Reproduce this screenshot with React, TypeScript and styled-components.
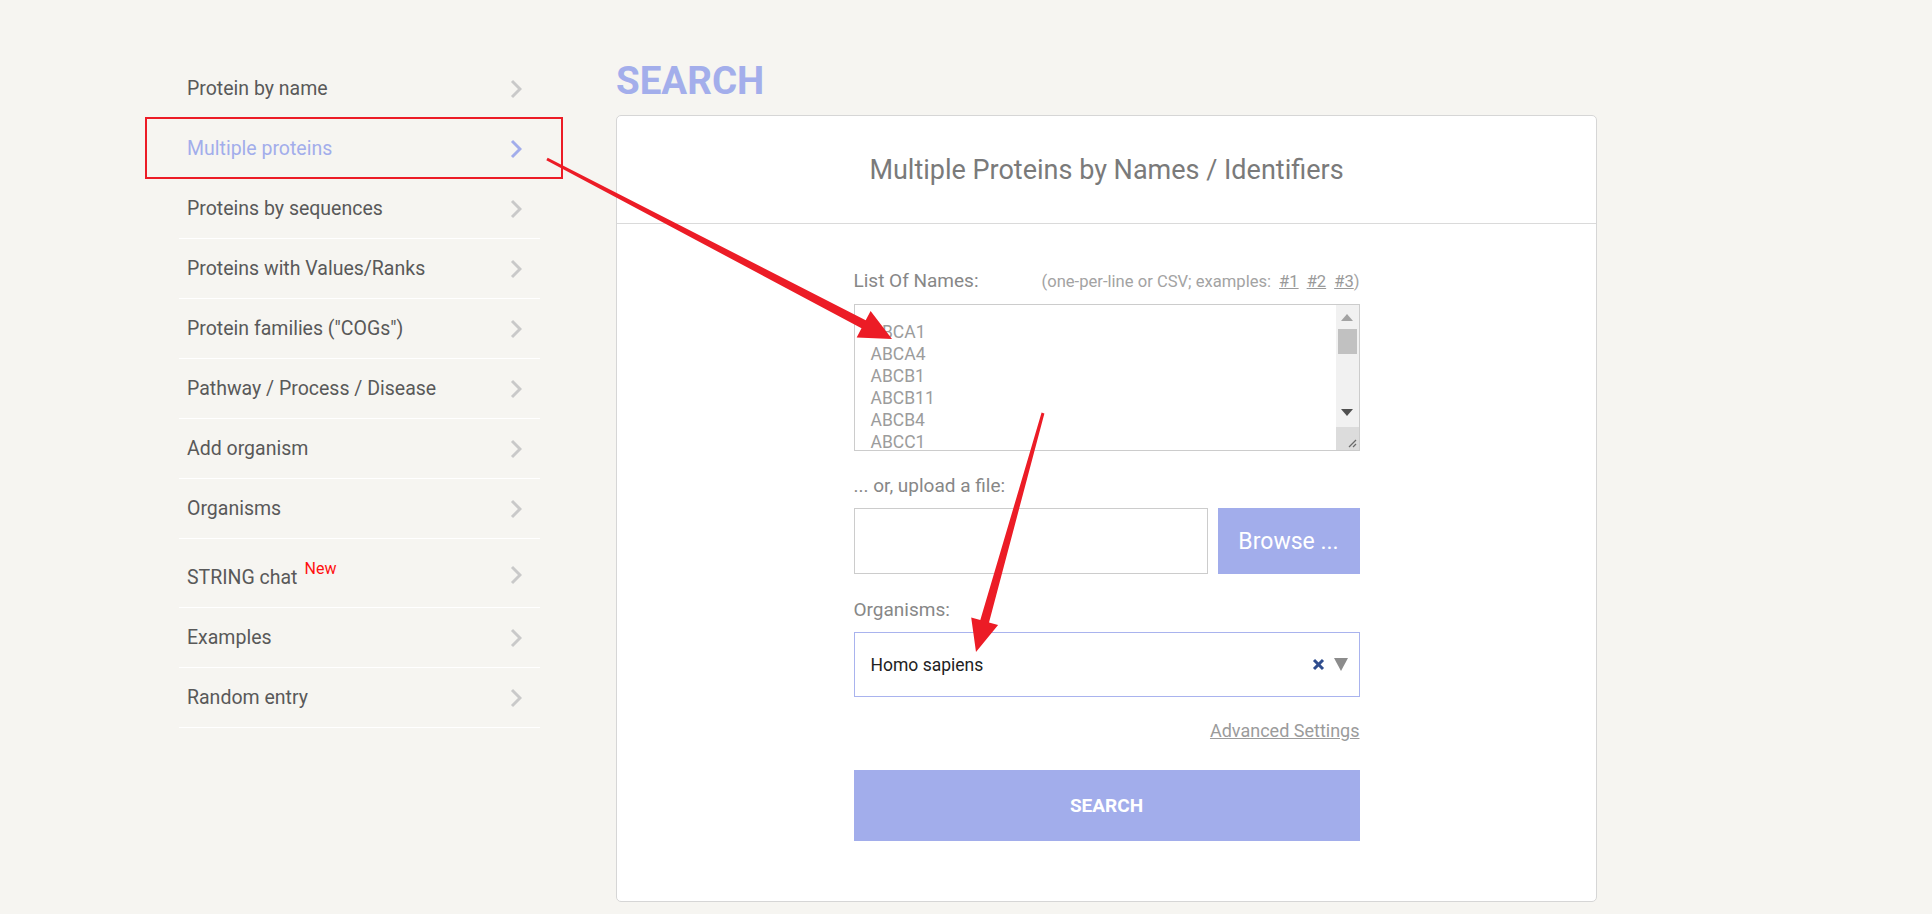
import React from 'react';
import styled, { createGlobalStyle } from 'styled-components';

const ACCENT = '#a2adeb';
const ANNOTATION = '#ec1c26';

const GlobalStyle = createGlobalStyle`
  html, body {
    margin: 0;
    padding: 0;
    background: #f6f5f1;
  }
  body {
    font-family: Roboto, "Liberation Sans", Arial, sans-serif;
  }
  *, *::before, *::after {
    box-sizing: border-box;
  }
`;

const Page = styled.div`
  position: relative;
  min-height: 914px;
  display: flex;
  align-items: flex-start;
  gap: 76px;
  padding: 59px 0 0 179px;
`;

const Sidebar = styled.nav`
  width: 361px;
  display: flex;
  flex-direction: column;
`;

const NavRow = styled.a<{ $active?: boolean; $tall?: boolean }>`
  display: flex;
  align-items: center;
  justify-content: space-between;
  height: ${p => (p.$tall ? 69 : 60)}px;
  padding: ${p => (p.$tall ? '4px' : '0')} 18px 0 8px;
  border-bottom: 1px solid #ffffff;
  font-size: 19.5px;
  color: ${p => (p.$active ? ACCENT : '#595959')};
  text-decoration: none;
  cursor: pointer;
`;

const NewBadge = styled.sup`
  position: relative;
  top: -2px;
  margin-left: 7px;
  font-size: 16px;
  color: #ff1010;
`;

const ChevronSvg = styled.svg<{ $active?: boolean }>`
  width: 12px;
  height: 20px;
  flex: none;
  polyline {
    fill: none;
    stroke: ${p => (p.$active ? ACCENT : '#c9c9c9')};
    stroke-width: 3;
  }
`;

const Chevron = ({ active }: { active?: boolean }) => (
  <ChevronSvg $active={active} viewBox="0 0 12 20">
    <polyline points="2,2 10,10 2,18" />
  </ChevronSvg>
);

const Main = styled.main`
  width: 981px;
  display: flex;
  flex-direction: column;
`;

const Title = styled.h1`
  margin: 2px 0 14px;
  font-size: 38.5px;
  line-height: 40px;
  font-weight: 700;
  color: #a3aeeb;
`;

const Card = styled.section`
  background: #ffffff;
  border: 1px solid #d6d6d6;
  border-radius: 5px;
`;

const CardHeader = styled.header`
  height: 108px;
  display: flex;
  align-items: center;
  justify-content: center;
  border-bottom: 1px solid #dadada;
  font-size: 27px;
  color: #7a7a7a;
`;

const CardBody = styled.div`
  padding: 45px 0 60px;
`;

const Form = styled.form`
  width: 506px;
  margin: 0 auto;
  display: flex;
  flex-direction: column;
`;

const LabelRow = styled.div<{ $top?: number; $bottom?: number }>`
  display: flex;
  justify-content: space-between;
  align-items: baseline;
  height: 24px;
  line-height: 24px;
  margin: ${p => p.$top ?? 0}px 0 ${p => p.$bottom ?? 10}px;
`;

const Label = styled.label`
  font-size: 19px;
  color: #878787;
`;

const Hint = styled.span`
  font-size: 16.6px;
  color: #a3a3a3;
`;

const HintLink = styled.a`
  margin-left: 8px;
  color: #9a9a9a;
  text-decoration: underline;
`;

const NamesBox = styled.div`
  display: flex;
  height: 147px;
  border: 1px solid #cccccc;
  background: #ffffff;
`;

const NamesInput = styled.textarea`
  flex: 1;
  border: 0;
  outline: none;
  resize: none;
  overflow: hidden;
  padding: 16px;
  font-family: Roboto, "Liberation Sans", Arial, sans-serif;
  font-size: 17.5px;
  line-height: 22px;
  color: #9c9c9c;
  background: transparent;
`;

const Scrollbar = styled.div`
  width: 23px;
  flex: none;
  display: flex;
  flex-direction: column;
  align-items: center;
  background: #f1f1f1;
`;

const ScrollArrow = styled.div<{ $dir: 'up' | 'down' }>`
  width: 0;
  height: 0;
  border-left: 6px solid transparent;
  border-right: 6px solid transparent;
  ${p =>
    p.$dir === 'up'
      ? `border-bottom: 7px solid #a3a3a3; margin-top: 9px;`
      : `border-top: 7px solid #505050; margin-bottom: 11px;`}
`;

const ScrollThumb = styled.div`
  width: 19px;
  height: 25px;
  margin-top: 8px;
  background: #c1c1c1;
`;

const ScrollSpacer = styled.div`
  flex: 1;
`;

const Grip = styled.div`
  width: 100%;
  height: 23px;
  display: flex;
  align-items: flex-end;
  justify-content: flex-end;
  background: #dcdcdc;
  svg {
    width: 10px;
    height: 10px;
    margin: 0 2px 2px 0;
  }
  line {
    stroke: #6a6a6a;
    stroke-width: 1.2;
  }
`;

const FileRow = styled.div`
  display: flex;
  gap: 10px;
  height: 66px;
`;

const FileBox = styled.div`
  flex: 1;
  border: 1px solid #cccccc;
  background: #ffffff;
`;

const BrowseButton = styled.button`
  width: 142px;
  border: 0;
  background: ${ACCENT};
  color: #ffffff;
  font-family: Roboto, "Liberation Sans", Arial, sans-serif;
  font-size: 23px;
  cursor: pointer;
`;

const Select = styled.div`
  height: 65px;
  display: flex;
  align-items: center;
  padding: 0 11px 0 16px;
  border: 1px solid #a9b3ee;
  background: #ffffff;
  font-size: 17.5px;
  color: #222222;
`;

const SelectValue = styled.span`
  flex: 1;
`;

const ClearIcon = styled.svg`
  width: 13px;
  height: 13px;
  margin-right: 9px;
  line {
    stroke: #2f4d8e;
    stroke-width: 3;
  }
`;

const Caret = styled.span`
  width: 0;
  height: 0;
  border-left: 7px solid transparent;
  border-right: 7px solid transparent;
  border-top: 13px solid #8c8c8c;
`;

const AdvancedLink = styled.a`
  align-self: flex-end;
  margin-top: 22px;
  height: 24px;
  line-height: 24px;
  font-size: 18px;
  color: #9b9b9b;
  text-decoration: underline;
`;

const SearchButton = styled.button`
  margin-top: 27px;
  height: 71px;
  width: 100%;
  border: 0;
  background: ${ACCENT};
  color: #ffffff;
  font-family: Roboto, "Liberation Sans", Arial, sans-serif;
  font-size: 19px;
  font-weight: 700;
  cursor: pointer;
`;

const Annotations = styled.svg`
  position: absolute;
  top: 0;
  left: 0;
  width: 1932px;
  height: 914px;
  pointer-events: none;
  rect {
    fill: none;
    stroke: ${ANNOTATION};
    stroke-width: 2;
  }
  polygon {
    fill: ${ANNOTATION};
  }
`;

// tapered arrow: thin tail, widening shaft, triangular head
function arrowPoints(
  x1: number,
  y1: number,
  x2: number,
  y2: number,
  headLen = 28,
  headHalf = 13,
  tail = 1,
  neck = 3.5
) {
  const dx = x2 - x1;
  const dy = y2 - y1;
  const len = Math.hypot(dx, dy);
  const ux = dx / len;
  const uy = dy / len;
  const px = -uy;
  const py = ux;
  const bx = x2 - ux * headLen;
  const by = y2 - uy * headLen;
  const pts = [
    [x1 + px * tail, y1 + py * tail],
    [bx + px * neck, by + py * neck],
    [bx + px * headHalf, by + py * headHalf],
    [x2, y2],
    [bx - px * headHalf, by - py * headHalf],
    [bx - px * neck, by - py * neck],
    [x1 - px * tail, y1 - py * tail],
  ];
  return pts.map(p => `${p[0].toFixed(1)},${p[1].toFixed(1)}`).join(' ');
}

const navItems = [
  'Protein by name',
  'Multiple proteins',
  'Proteins by sequences',
  'Proteins with Values/Ranks',
  'Protein families ("COGs")',
  'Pathway / Process / Disease',
  'Add organism',
  'Organisms',
  'STRING chat',
  'Examples',
  'Random entry',
];

const names = ['ABCA1', 'ABCA4', 'ABCB1', 'ABCB11', 'ABCB4', 'ABCC1', 'ABCC2', 'ABCC8', 'ABCD1', 'ABCG2'].join('\n');

const App: React.FC = () => {
  return (
    <>
      <GlobalStyle />
      <Page>
        <Sidebar>
          {navItems.map(item => {
            const active = item === 'Multiple proteins';
            const chat = item === 'STRING chat';
            return (
              <NavRow key={item} $active={active} $tall={chat}>
                <span>
                  {item}
                  {chat && <NewBadge>New</NewBadge>}
                </span>
                <Chevron active={active} />
              </NavRow>
            );
          })}
        </Sidebar>

        <Main>
          <Title>SEARCH</Title>
          <Card>
            <CardHeader>Multiple Proteins by Names / Identifiers</CardHeader>
            <CardBody>
              <Form onSubmit={e => e.preventDefault()}>
                <LabelRow $bottom={11}>
                  <Label>List Of Names:</Label>
                  <Hint>
                    (one-per-line or CSV; examples:
                    <HintLink>#1</HintLink>
                    <HintLink>#2</HintLink>
                    <HintLink>#3</HintLink>)
                  </Hint>
                </LabelRow>
                <NamesBox>
                  <NamesInput defaultValue={names} spellCheck={false} />
                  <Scrollbar>
                    <ScrollArrow $dir="up" />
                    <ScrollThumb />
                    <ScrollSpacer />
                    <ScrollArrow $dir="down" />
                    <Grip>
                      <svg viewBox="0 0 10 10">
                        <line x1="9" y1="2" x2="2" y2="9" />
                        <line x1="9" y1="6" x2="6" y2="9" />
                      </svg>
                    </Grip>
                  </Scrollbar>
                </NamesBox>

                <LabelRow $top={23}>
                  <Label>... or, upload a file:</Label>
                </LabelRow>
                <FileRow>
                  <FileBox />
                  <BrowseButton type="button">Browse ...</BrowseButton>
                </FileRow>

                <LabelRow $top={24}>
                  <Label>Organisms:</Label>
                </LabelRow>
                <Select>
                  <SelectValue>Homo sapiens</SelectValue>
                  <ClearIcon viewBox="0 0 13 13">
                    <line x1="2" y1="2" x2="11" y2="11" />
                    <line x1="11" y1="2" x2="2" y2="11" />
                  </ClearIcon>
                  <Caret />
                </Select>

                <AdvancedLink>Advanced Settings</AdvancedLink>
                <SearchButton type="submit">SEARCH</SearchButton>
              </Form>
            </CardBody>
          </Card>
        </Main>

        <Annotations viewBox="0 0 1932 914">
          <rect x="146" y="118" width="416" height="60" />
          <polygon points={arrowPoints(547, 159, 892, 339, 32, 15, 1.5, 4.5)} />
          <polygon points={arrowPoints(1043, 413, 976, 652, 32, 14, 1.5, 4.5)} />
        </Annotations>
      </Page>
    </>
  );
};

export default App;
